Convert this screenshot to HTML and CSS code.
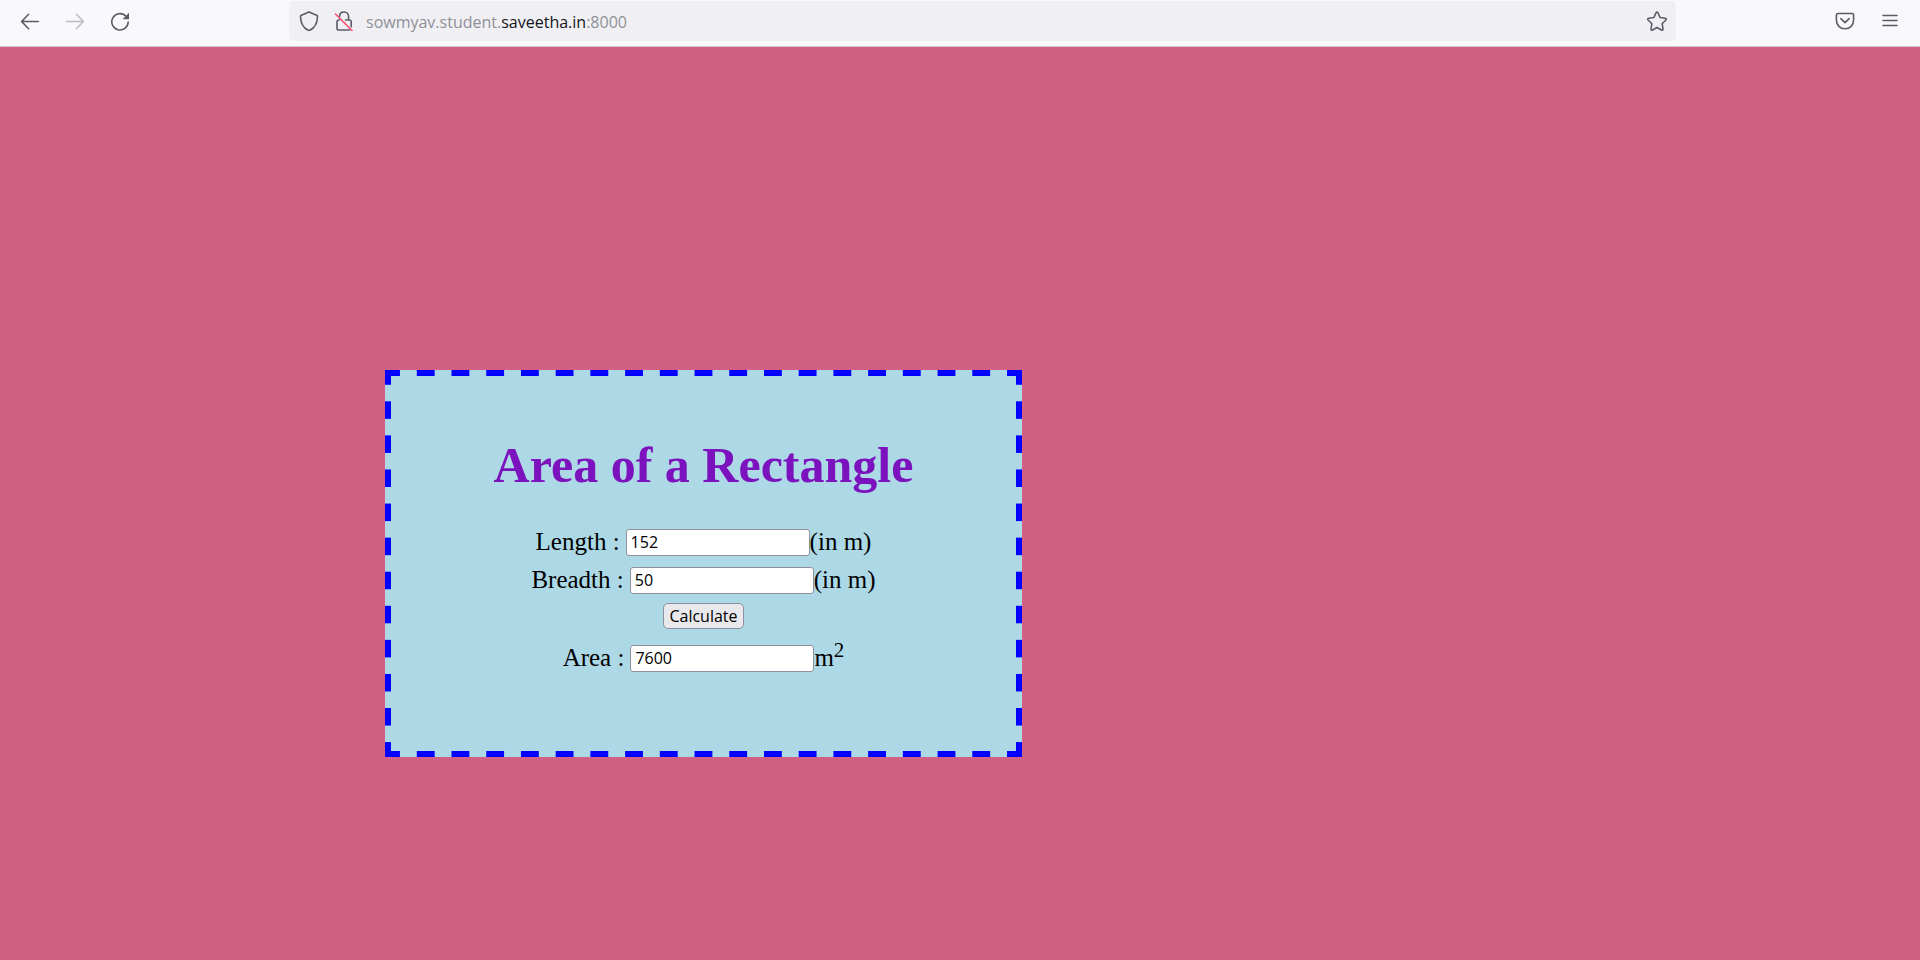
FILE: index.html
```
<!DOCTYPE html>
<html lang="en">
<head>
<meta charset="utf-8">
<title>Area of a Rectangle</title>
<link rel="stylesheet" href="styles.css">
</head>
<body>
<header class="toolbar">
  <nav class="nav" aria-label="History">
    <button class="tool" type="button" aria-label="Back"><svg class="icon" viewBox="0 0 20 20"><path d="M18.300 10.500H1.800M8.600 3.300l-7 7.200 7 7.200"/></svg></button>
    <button class="tool" type="button" aria-label="Forward" disabled><svg class="icon" viewBox="0 0 20 20"><path d="M1.700 10.500h16.500M11.400 3.300l7 7.200-7 7.200"/></svg></button>
    <button class="tool" type="button" aria-label="Reload"><svg class="icon" viewBox="0 0 20 20"><path d="M18.200 11a8.200 8.200 0 1 1-2.600-6.200"/><path class="solid" d="M19 1.800v6.400h-6.400z"/></svg></button>
  </nav>
  <div class="address">
    <button class="mark" type="button" aria-label="Tracking protection"><svg class="icon" viewBox="0 0 20 20"><path d="M10 .9 17.600 4.200c.7.3 1 .8.9 1.500-.3 6.800-2.600 11-7.300 13.300-.8.400-1.600.4-2.400 0C4.100 16.700 1.800 12.500 1.500 5.700c0-.7.2-1.200.9-1.500z"/></svg></button>
    <button class="mark" type="button" aria-label="Connection not secure"><svg class="icon" viewBox="0 0 20 20"><path d="M5.600 5.500C5.600 2.800 7.400 1 10 1s4.600 2 4.600 4.800V9h.8c1.200 0 1.800.6 1.800 1.800v5M11.500 9h3M5.500 9H4.800C3.600 9 3 9.600 3 10.800v6.400C3 18.400 3.600 19 4.800 19h10.800"/><path class="strike" d="M1.500 3l16.500 16.500"/></svg></button>
    <a class="url" href="#">sowmyav.student.<span class="domain">saveetha.in</span>:8000</a>
    <button class="mark" type="button" aria-label="Bookmark"><svg class="icon" viewBox="0 0 20 20"><path d="M9.100 1.700c.4-.9 1.400-.9 1.800 0l2.200 4.800 5.200.7c1 .1 1.300 1.100.6 1.800l-3.800 3.700.9 5.200c.2 1-.7 1.600-1.500 1.100L10 16.500 5.500 19c-.8.500-1.700-.1-1.500-1.100l.9-5.200L1.100 9c-.7-.7-.4-1.700.6-1.800l5.200-.7z"/></svg></button>
  </div>
  <div class="extras">
    <button class="tool" type="button" aria-label="Save to Pocket"><svg class="icon" viewBox="0 0 20 20"><path d="M3 2.500h14c1 0 1.600.6 1.600 1.600v5c0 5-3.600 8.700-8.600 8.700S1.400 14.100 1.400 9.100v-5c0-1 .6-1.600 1.600-1.600zM5.800 7.700l4.200 4 4.200-4"/></svg></button>
    <button class="tool" type="button" aria-label="Menu"><svg class="icon" viewBox="0 0 20 20"><path d="M3 4.500h14M3 9.500h14M3 14.500h14"/></svg></button>
  </div>
</header>
<main class="page">
  <form class="card">
    <h1 class="title">Area of a Rectangle</h1>
    <div class="row"><label class="name" for="length">Length :</label><input class="field" id="length" type="text" value="152">(in m)</div>
    <div class="row"><label class="name" for="breadth">Breadth :</label><input class="field" id="breadth" type="text" value="50">(in m)</div>
    <div class="action"><button class="calculate" type="button">Calculate</button></div>
    <div class="row"><label class="name" for="area">Area :</label><input class="field" id="area" type="text" value="7600"><span>m<sup class="power">2</sup></span></div>
  </form>
</main>
</body>
</html>
```
FILE: styles.css
```
* { box-sizing: border-box; }

body {
  margin: 0;
  min-height: 100vh;
  background: #d06185;
  color: #000;
  font-family: "Liberation Serif", "Times New Roman", serif;
  font-size: 25px;
}

.toolbar {
  display: flex;
  align-items: flex-start;
  padding-top: 1px;
  height: 47px;
  background: #f9f9fb;
  border-bottom: 1px solid #ccccce;
}

.nav,
.extras,
.address {
  display: flex;
  align-items: center;
  height: 40px;
}

.nav {
  flex: 0 0 289px;
  gap: 25px;
  padding-left: 20px;
}

.extras {
  flex: 0 0 244px;
  justify-content: flex-end;
  gap: 25px;
  padding-right: 20px;
}

.address {
  flex: 1;
  min-width: 0;
  padding: 0 9px 0 10px;
  background: #f0f0f4;
  border-radius: 5px;
}

.tool,
.mark {
  display: flex;
  padding: 0;
  border: 0;
  background: none;
  color: #5b5b66;
}

.tool:disabled { color: #bdbdc3; }

.mark + .mark { margin-left: 15px; }

.icon {
  width: 20px;
  height: 20px;
  fill: none;
  stroke: currentColor;
  stroke-width: 1.6;
  stroke-linecap: round;
  stroke-linejoin: round;
}

.solid { fill: currentColor; stroke: none; }

.strike { stroke: #ff4f72; }

.url {
  flex: 1;
  margin-left: 12px;
  padding-top: 2px;
  color: #8f8f96;
  font-family: "Open Sans", "Noto Sans", sans-serif;
  font-size: 16px;
  line-height: 24px;
  text-decoration: none;
}

.domain { color: #15141a; }

.page { padding: 323px 0 60px 385px; }

/* Dashes run along all four edges, rounded so that they meet at the corners. */
.card {
  --across: linear-gradient(90deg, #00f 25%, transparent 25% 75%, #00f 75%);
  --down: linear-gradient(#00f 25%, transparent 25% 75%, #00f 75%);
  width: 637px;
  max-width: 100%;
  padding: 60px 0 74px;
  border: 6px solid transparent;
  background:
    var(--across) 0 -6px / 35px 6px round no-repeat,
    var(--across) 0 calc(100% + 6px) / 35px 6px round no-repeat,
    var(--down) -6px 0 / 6px 34px no-repeat round,
    var(--down) calc(100% + 6px) 0 / 6px 34px no-repeat round,
    #add8e6;
  background-clip: border-box;
}

.title {
  margin: 0 0 29px;
  color: #7b12bd;
  font-size: 50px;
  line-height: 58px;
  text-align: center;
}

.row {
  display: flex;
  justify-content: center;
  align-items: center;
  line-height: 38px;
}

.name { margin-right: 6px; }

.field,
.calculate {
  border: 1px solid #8f8f9d;
  color: #000;
  font-family: "Open Sans", "Noto Sans", sans-serif;
  font-size: 16px;
}

.field {
  width: 184px;
  height: 27px;
  padding: 1px 4px;
  border-radius: 3px;
  background: #fff;
}

.action {
  display: flex;
  justify-content: center;
  padding: 4px 0 10px;
}

.calculate {
  height: 26px;
  padding: 0 5px;
  border-radius: 5px;
  background: #e9e9ed;
  line-height: 24px;
}

.power {
  font-size: 21px;
  line-height: 0;
}
```
